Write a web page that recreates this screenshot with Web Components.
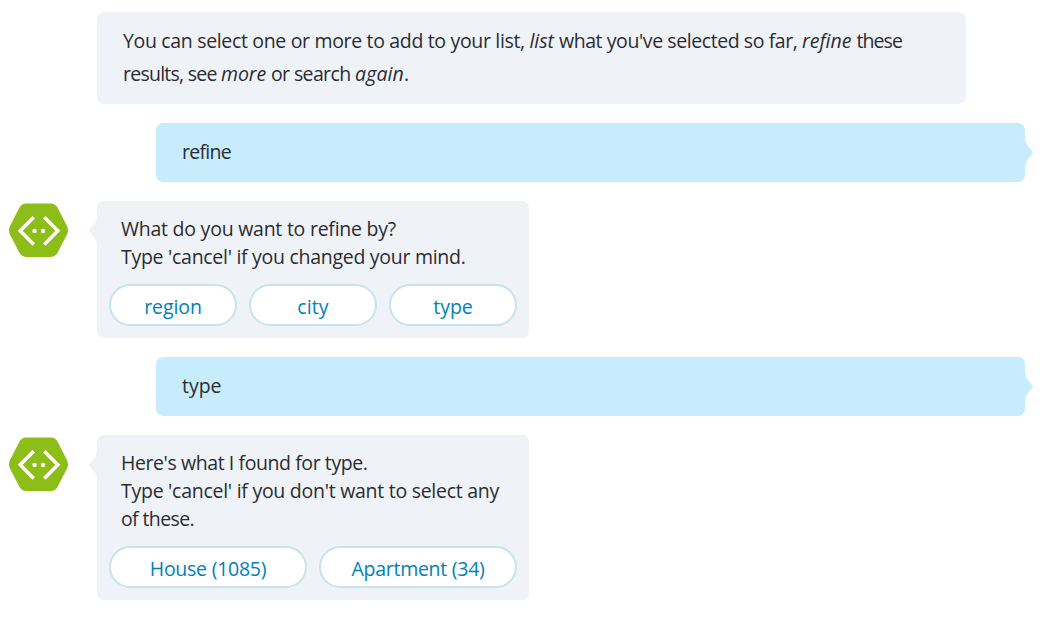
<!DOCTYPE html>
<html lang="en"><head><meta charset="utf-8"><title>Chat</title>
<style>body{margin:0;background:#fff}</style></head><body>
<chat-log>
<chat-message wide><p-line><t-run w="406.5">You can select one or more to add to your list, </t-run><t-run i w="29.5">list </t-run><t-run w="243">what you've selected so far, </t-run><t-run i w="54.5">refine </t-run><t-run w="45.5">these</t-run></p-line><p-line><t-run w="98">results, see </t-run><t-run i w="50">more </t-run><t-run w="84">or search </t-run><t-run i w="49">again</t-run><t-run w="5">.</t-run></p-line></chat-message>
<chat-message me><p-line><t-run w="49">refine</t-run></p-line></chat-message>
<chat-message bot><p-line><t-run w="275">What do you want to refine by?</t-run></p-line><p-line><t-run w="344.5">Type 'cancel' if you changed your mind.</t-run></p-line><chat-option slot="options"><t-run w="57.5">region</t-run></chat-option><chat-option slot="options"><t-run w="31.5">city</t-run></chat-option><chat-option slot="options"><t-run w="39.5">type</t-run></chat-option></chat-message>
<chat-message me><p-line><t-run w="39.5">type</t-run></p-line></chat-message>
<chat-message bot><p-line><t-run w="246.5">Here's what I found for type.</t-run></p-line><p-line><t-run w="378">Type 'cancel' if you don't want to select any</t-run></p-line><p-line><t-run w="73">of these.</t-run></p-line><chat-option slot="options"><t-run w="116.5">House (1085)</t-run></chat-option><chat-option slot="options"><t-run w="133">Apartment (34)</t-run></chat-option></chat-message>
</chat-log>
<script>
const define=(name,html,init)=>customElements.define(name,class extends HTMLElement{
  constructor(){super();this.attachShadow({mode:'open'}).innerHTML=html;}
  connectedCallback(){if(init)init(this);}
});
define('chat-log',`<style>:host{display:flex;flex-direction:column;gap:19px;padding:12px 18px 17px 9px;font:19.5px/28px "Open Sans","Noto Sans",sans-serif;color:#2b2c31}</style><slot></slot>`);
define('p-line',`<style>:host{display:block;white-space:nowrap}</style><slot></slot>`);
/* A run of text tracked to fill its measure. */
define('t-run',`<style>:host{display:inline-block;white-space:pre}:host([i]){font-style:italic}</style><slot></slot>`,el=>{
  const w=+el.getAttribute('w'),n=el.textContent.length;
  const natural=el.getBoundingClientRect().width;
  el.style.letterSpacing=((w-natural)/n).toFixed(3)+'px';
});
define('bot-avatar',`<style>:host{display:block;width:59px;height:54px}svg{display:block}</style>
<svg width="59" height="55" viewBox="0 0 59 55"><path d="M17 .5H42Q46 .5 48.5 4.5L58 22.9Q60 27.2 58 31.4L48.5 50Q46 54 42 54H17Q13 54 10.5 50L1 31.4Q-1 27.2 1 22.9L10.5 4.5Q13 .5 17 .5Z" fill="#8cbd18"/><path d="M24.7 14.2L11.2 27.8L24.7 41.4M35.3 14.2L48.8 27.8L35.3 41.4" fill="none" stroke="#fff" stroke-width="3.5"/><circle cx="25.5" cy="28" r="2.2" fill="#fff"/><circle cx="34" cy="28" r="2.2" fill="#fff"/></svg>`);
define('chat-option',`<style>:host{flex:1;display:block;box-sizing:border-box;height:42px;border:2px solid #c9e3eb;border-radius:21px;background:#fff;color:#007fb9;text-align:center;line-height:42px}</style><slot></slot>`);
define('chat-message',`<style>
:host{display:grid;grid-template-columns:88px 432px;align-items:start}
:host([wide]){grid-template-columns:88px 869px}
:host([me]){grid-template-columns:147px 869px}
.bubble{grid-column:2;position:relative;border-radius:7px;background:#eff3f8;padding:12px 26px 14px;line-height:33px}
:host([me]) .bubble{background:#c7edfc}
:host([bot]) .bubble{padding:14px 12px 12px;line-height:28px}
:host([bot]) .text{padding:0 12px}
.options,.tip,bot-avatar{display:none}
:host([bot]) .options{display:flex;gap:12px;margin-top:13px}
:host([bot]) bot-avatar{display:block;margin-top:2px}
:host([bot]) .tip{display:block;position:absolute;left:-8px;top:16px;fill:#eff3f8}
:host([me]) .tip{display:block;position:absolute;right:-8px;top:16px;fill:#c7edfc;transform:scaleX(-1)}
</style><bot-avatar></bot-avatar><div class="bubble"><svg class="tip" width="9" height="28"><path d="M9 0H8Q7.3 5 4 8.5L.8 12Q-.7 13.7 .8 15.5L4 19Q7.3 22.5 8 27H9Z"/></svg><div class="text"><slot></slot></div><div class="options"><slot name="options"></slot></div></div>`);
</script></body></html>
